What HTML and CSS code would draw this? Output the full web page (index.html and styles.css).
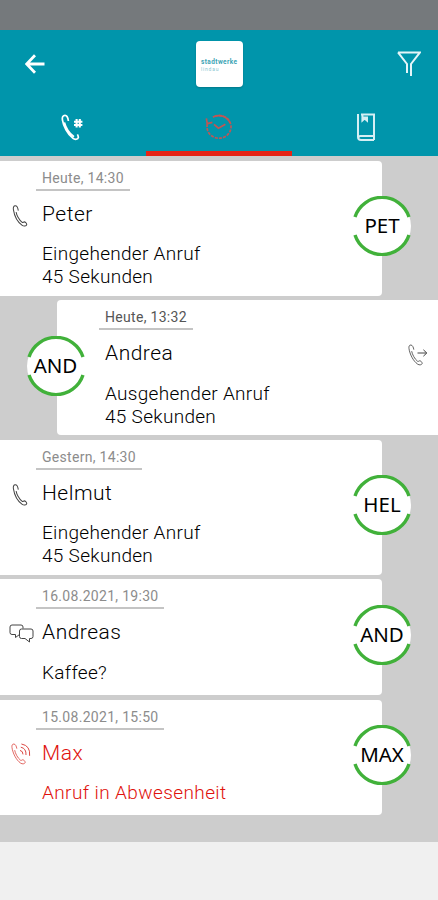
FILE: index.html
```html
<!DOCTYPE html>
<html lang="de">
<head>
  <meta charset="utf-8">
  <title>Anrufliste</title>
  <link rel="stylesheet" href="styles.css">
</head>
<body>

<!-- shared shapes -->
<svg class="defs" width="0" height="0">
  <symbol id="phone" viewBox="0 0 18 26">
    <path d="M7 6.6 C6.6 4 5.4 1 3.4 1 C1.4 1 .8 3 1.2 5.4 C2.2 12 6 20 11.6 24 C13.6 25.4 16.4 25 17 23.2 C17 21.4 15 19.6 13.6 20 C12.6 20.4 12.4 21 11.6 20.6 C8 18 5 12 4.4 8.4"/>
  </symbol>
  <symbol id="ring" viewBox="0 0 60 60">
    <circle cx="30" cy="30" r="29" fill="#fff"/>
    <path d="M3 21 A28.4 28.4 0 0 1 57 21 M3 39 A28.4 28.4 0 0 0 57 39" fill="none" stroke="#41b13a" stroke-width="3.4"/>
  </symbol>
</svg>

<div class="status-bar"></div>

<header class="header">
  <div class="toolbar">
    <svg class="back" viewBox="0 0 20 20"><path d="M19.5 10 H2 M10 1.2 L1.6 10 L10 18.8"/></svg>
    <div class="logo">
      <span class="logo-name">stadtwerke</span>
      <span class="logo-town">lindau</span>
    </div>
    <svg class="filter" viewBox="0 0 24 26"><path d="M1 1.4 H23 L14 13 V25 M1 1.4 L10 13 V22"/></svg>
  </div>
  <nav class="tabs">
    <div class="tab">
      <svg class="tab-icon dial" viewBox="0 0 22 27">
        <path d="M7.4 7 C7 4 6 1.4 4 1.4 C1.8 1.4 1 3.4 1.4 5.8 C2.4 12 6.4 20 12 24.4 C14 26 17 25.4 17.4 23.4 C17.2 22 16.8 21 16.4 20.4 M3.4 8.4 C4.6 13 8 19 13 22.8"/>
        <path class="hash" d="M15.6 5 V13.6 M18.8 5 V13.6 M13 7.8 H21.4 M13 11 H21.4"/>
      </svg>
    </div>
    <div class="tab active">
      <svg class="tab-icon history" viewBox="0 0 28 26">
        <path class="dashed" d="M2.4 10 A12 11.4 0 1 0 8 3"/>
        <path d="M8 3 A12 11.4 0 0 1 25 9 M1.4 4.4 L2.2 9.6 L7.4 8.4 M9 10.4 L13.4 14.2 L20.4 10.2"/>
      </svg>
    </div>
    <div class="tab">
      <svg class="tab-icon book" viewBox="0 0 18 28">
        <path d="M1 1 V24 Q1 27 4 27 H17 M4 1.4 H17 V23 H3.4 Q1.4 23.2 1.4 25 M17 23 V27 M5.4 1 V7.6 L7.6 5.6 L10 7.6 V4.4 H6"/>
      </svg>
    </div>
  </nav>
</header>

<main class="list">
  <section class="card">
    <svg class="icon call"><use href="#phone"/></svg>
    <div class="text">
      <div class="date short">Heute, 14:30</div>
      <div class="name">Peter</div>
      <div class="info">Eingehender Anruf<br>45 Sekunden</div>
    </div>
    <div class="avatar"><svg><use href="#ring"/></svg><span>PET</span></div>
  </section>

  <section class="card outgoing">
    <div class="text">
      <div class="date short dark">Heute, 13:32</div>
      <div class="name">Andrea</div>
      <div class="info">Ausgehender Anruf<br>45 Sekunden</div>
    </div>
    <svg class="icon call-out" viewBox="0 0 20 22">
      <use href="#phone" width="15" height="22"/>
      <path d="M9.5 9 H18.5 M15.4 5.8 L18.8 9 L15.4 12.2"/>
    </svg>
    <div class="avatar"><svg><use href="#ring"/></svg><span>AND</span></div>
  </section>

  <section class="card">
    <svg class="icon call"><use href="#phone"/></svg>
    <div class="text">
      <div class="date">Gestern, 14:30</div>
      <div class="name">Helmut</div>
      <div class="info">Eingehender Anruf<br>45 Sekunden</div>
    </div>
    <div class="avatar"><svg><use href="#ring"/></svg><span>HEL</span></div>
  </section>

  <section class="card small">
    <svg class="icon chat" viewBox="0 0 25 19">
      <path d="M10.5 10.5 L6.5 13.5 V10.5 H3 Q1 10.5 1 8.5 V3 Q1 1 3 1 H12 Q14 1 14 3 V4.5"/>
      <path d="M12.5 5 H22 Q24 5 24 7 V12.5 Q24 14.5 22 14.5 H20.5 V18 L16 14.5 H12.5 Q10.5 14.5 10.5 12.5 V7 Q10.5 5 12.5 5 Z"/>
    </svg>
    <div class="text">
      <div class="date long">16.08.2021, 19:30</div>
      <div class="name">Andreas</div>
      <div class="info">Kaffee?</div>
    </div>
    <div class="avatar"><svg><use href="#ring"/></svg><span>AND</span></div>
  </section>

  <section class="card small missed">
    <svg class="icon call-missed" viewBox="0 0 21 22">
      <use href="#phone" width="15" height="22"/>
      <path d="M9 7.4 Q12 8 12 11.4 M9.8 4.2 Q15.4 5.4 15 12 M10.4 1 Q19.6 2.6 18.6 12.8"/>
    </svg>
    <div class="text">
      <div class="date long">15.08.2021, 15:50</div>
      <div class="name">Max</div>
      <div class="info">Anruf in Abwesenheit</div>
    </div>
    <div class="avatar"><svg><use href="#ring"/></svg><span>MAX</span></div>
  </section>
</main>

</body>
</html>
```
FILE: styles.css
```css
* {
  box-sizing: border-box;
}
body {
  margin: 0;
  height: 900px;
  background: #f0f0f0;
  font-family: Roboto, "Liberation Sans", sans-serif;
  font-weight: 300;
  color: #000;
  overflow: hidden;
}
svg {
  display: block;
  fill: none;
}
.defs {
  position: absolute;
}
.status-bar {
  height: 30px;
  background: #75797c;
}

/* Header */
.header {
  height: 125.5px;
  background: #0095ab;
  stroke: #fff;
}
.toolbar {
  display: flex;
  justify-content: space-between;
  align-items: center;
  height: 67px;
  padding: 0 17px 0 25px;
}
.back {
  width: 20px;
  height: 20px;
  stroke-width: 2.8;
}
.logo {
  display: flex;
  flex-direction: column;
  width: 47px;
  height: 46px;
  margin-right: 3px;
  padding: 17px 0 0 5px;
  border-radius: 4px;
  background: #fff;
  box-shadow: 0 1px 2px rgba(0, 0, 0, 0.2);
  stroke: none;
}
.logo-name {
  font-size: 6.5px;
  line-height: 8px;
  font-weight: bold;
  letter-spacing: 0.4px;
  color: #3ba3b4;
}
.logo-town {
  font-size: 5px;
  line-height: 6px;
  font-weight: 400;
  letter-spacing: 0.8px;
  color: #8cc8d2;
}
.filter {
  width: 24px;
  height: 26px;
  stroke-width: 2;
  stroke: #e4f5f8;
}
.tabs {
  display: flex;
  height: 58.5px;
}
.tab {
  flex: 1;
  display: flex;
  justify-content: center;
  padding-top: 17px;
}
.tab.active {
  border-bottom: 5.5px solid #e62315;
}
.tab-icon {
  width: 22px;
  height: 27px;
  stroke-width: 1.7;
}
.dial {
  margin-right: 2px;
}
.hash {
  stroke-width: 2.1;
}
.history {
  width: 28px;
  height: 26px;
  stroke: #bf5654;
}
.dashed {
  stroke-dasharray: 3 1.2;
}
.book {
  width: 18px;
  height: 28px;
  margin: -1px 0 0 2px;
  stroke-width: 2;
  stroke: #d5eff4;
}

/* Call list */
.list {
  display: flex;
  flex-direction: column;
  gap: 4.6px;
  height: 686.5px;
  padding-top: 5px;
  background: #cdcdcd;
}
.card {
  position: relative;
  display: flex;
  flex-shrink: 0;
  width: 382px;
  height: 135px;
  padding-top: 9px;
  background: #fff;
  border-radius: 0 4px 4px 0;
}
.card.small {
  height: 115.8px;
}
.card.outgoing {
  align-self: flex-end;
  width: 381.5px;
  padding-left: 42.5px;
  border-radius: 4px 0 0 4px;
}
.text {
  width: 300px;
}
.icon {
  flex-shrink: 0;
  stroke: #444;
  stroke-width: 1;
}
.call {
  width: 16px;
  height: 22px;
  margin: 35px 8px 0 12px;
  stroke-width: 1.2;
}
.call-out {
  width: 20px;
  height: 22px;
  margin: 35px 0 0 8.5px;
}
.chat {
  width: 25px;
  height: 19px;
  margin: 36px 2px 0 9px;
}
.call-missed {
  width: 21px;
  height: 22px;
  margin: 34px 4px 0 11px;
  stroke: #dc4a45;
}
.date {
  width: 106px;
  height: 21px;
  padding-left: 6px;
  border-bottom: 2px solid #c4c4c4;
  font-size: 14px;
  font-weight: 400;
  line-height: 17px;
  letter-spacing: 0.3px;
  white-space: nowrap;
  color: #8c8c8c;
}
.date.short {
  width: 94px;
}
.date.long {
  width: 128px;
}
.date.dark {
  color: #555;
}
.name {
  padding: 11px 0 0 6px;
  font-size: 21px;
  font-weight: 350;
  line-height: 24px;
  letter-spacing: 0.5px;
}
.info {
  padding: 16.5px 0 0 6px;
  font-size: 19px;
  line-height: 23px;
  letter-spacing: 0.3px;
}
.missed .name,
.missed .info {
  color: #e0120c;
}
.missed .info {
  letter-spacing: 0.4px;
}

/* Initials badge on the card's edge */
.avatar {
  position: absolute;
  top: 35.5px;
  right: -30px;
  width: 60px;
  height: 60px;
  font-family: "Noto Sans", sans-serif;
  font-size: 20.5px;
  font-weight: 400;
  line-height: 59px;
  text-align: center;
}
.avatar svg {
  position: absolute;
  width: 60px;
  height: 60px;
}
.avatar span {
  position: relative;
}
.outgoing .avatar {
  right: auto;
  left: -31px;
}
.small .avatar {
  top: 25.5px;
}
```
